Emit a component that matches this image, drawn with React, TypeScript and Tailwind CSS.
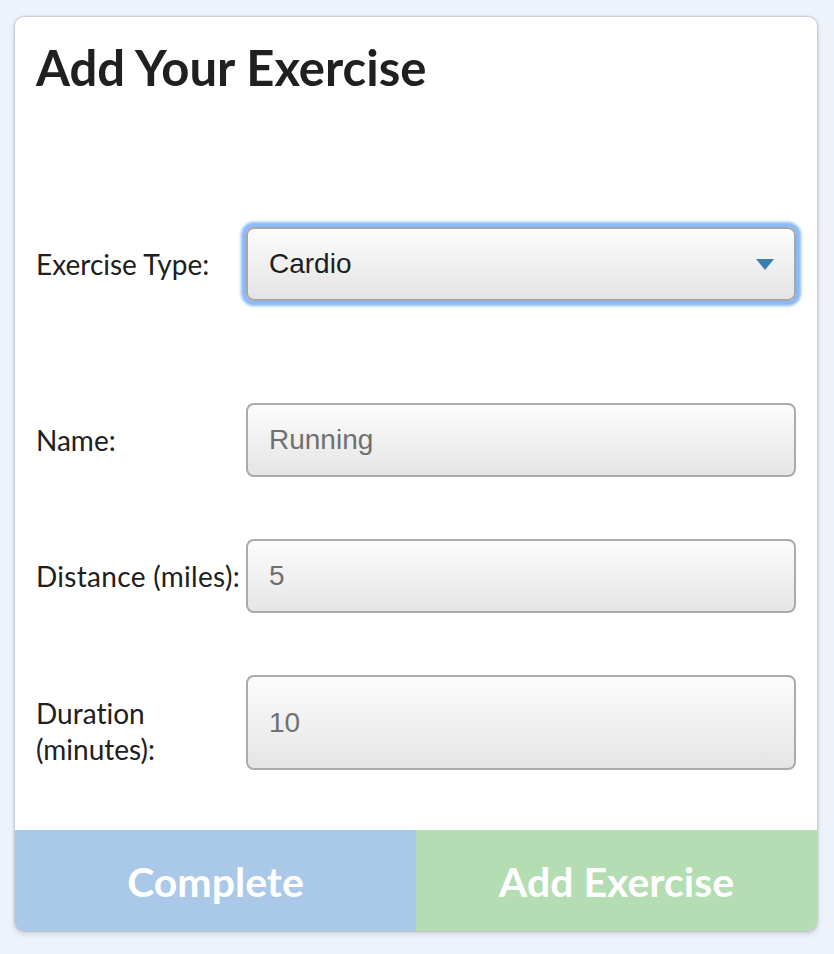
import React from "react";

const valueFont = { fontFamily: "'Liberation Sans', Arial, sans-serif" };

export default function App() {
  return (
    <div className="min-h-[954px] w-[834px] bg-[#eef3fb] pl-[15px] pr-[17px] pt-[17px]">
      <div
        className="overflow-hidden rounded-[9px] bg-white shadow-[0_0_2px_1px_rgba(0,0,0,0.16),0_3px_6px_rgba(0,0,0,0.12)] [font-variant-ligatures:none]"
        style={{ fontFamily: "Lato, sans-serif" }}
      >
        <div className="px-[21px] pt-[22px]">
          <h1 className="text-[49px] font-bold leading-[56px] text-[#202020]">Add Your Exercise</h1>

          <div className="mt-[132px] flex items-center">
            <label className="w-[210px] shrink-0 text-[28px] text-[#202020]">Exercise Type:</label>
            <div className="flex h-[74px] flex-1 items-center justify-between rounded-[8px] border-2 border-[#a6a6a6] bg-gradient-to-b from-[#fcfcfc] to-[#e4e4e4] pl-[21px] pr-[20px] shadow-[0_0_3px_5px_#88b8f5]">
              <span className="text-[28px] text-[#1e1e1e]" style={valueFont}>
                Cardio
              </span>
              <svg width="18" height="11" viewBox="0 0 18 11">
                <polygon points="0,0 18,0 9,11" fill="#3a7fb3" />
              </svg>
            </div>
          </div>

          <div className="mt-[102px] flex items-center">
            <label className="w-[210px] shrink-0 text-[28px] text-[#202020]">Name:</label>
            <div className="flex h-[74px] flex-1 items-center rounded-[8px] border-2 border-[#ababab] bg-gradient-to-b from-[#fcfcfc] to-[#e5e5e5] px-[21px]">
              <span className="text-[28px] text-[#707070]" style={valueFont}>
                Running
              </span>
            </div>
          </div>

          <div className="mt-[62px] flex items-center">
            <label className="w-[210px] shrink-0 whitespace-nowrap text-[28px] tracking-[0.3px] text-[#202020]">
              Distance (miles):
            </label>
            <div className="flex h-[74px] flex-1 items-center rounded-[8px] border-2 border-[#ababab] bg-gradient-to-b from-[#fcfcfc] to-[#e5e5e5] px-[21px]">
              <span className="text-[28px] text-[#707070]" style={valueFont}>
                5
              </span>
            </div>
          </div>

          <div className="mt-[62px] flex items-center">
            <label className="mt-[16px] w-[210px] shrink-0 text-[28px] leading-[36px] text-[#202020]">
              Duration
              <br />
              (minutes):
            </label>
            <div className="flex h-[95px] flex-1 items-center rounded-[8px] border-2 border-[#ababab] bg-gradient-to-b from-[#fcfcfc] to-[#e5e5e5] px-[21px]">
              <span className="text-[28px] text-[#707070]" style={valueFont}>
                10
              </span>
            </div>
          </div>
        </div>

        <div className="mt-[60px] flex h-[101px]">
          <button className="flex flex-1 items-center justify-center bg-[#aac9e8] pt-[3px] text-[41px] font-bold text-white">
            Complete
          </button>
          <button className="flex flex-1 items-center justify-center bg-[#b5ddb3] pt-[3px] text-[41px] font-bold text-white">
            Add Exercise
          </button>
        </div>
      </div>
    </div>
  );
}
